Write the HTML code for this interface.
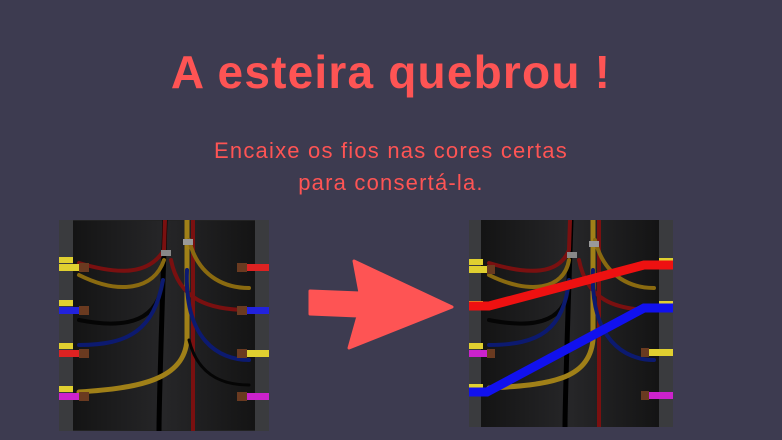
<!DOCTYPE html>
<html><head><meta charset="utf-8"><style>
body{margin:0;width:782px;height:440px;background:#3d3b50;overflow:hidden;position:relative;font-family:"Liberation Sans",sans-serif;color:#fe5454}
h1{position:absolute;left:0;width:782px;top:42px;margin:0;text-align:center;font-size:46px;font-weight:bold;line-height:60px;letter-spacing:1.2px}
.sub{position:absolute;left:0;width:782px;top:135px;text-align:center;font-size:22px;line-height:32px;letter-spacing:1.2px}
svg{position:absolute}
</style></head><body>
<h1>A esteira quebrou !</h1>
<div class="sub">Encaixe os fios nas cores certas<br>para consertá-la.</div>

<svg style="left:59px;top:220px" width="210" height="211" viewBox="0 0 210 211">
<defs><linearGradient id="bg" x1="0" x2="1"><stop offset="0" stop-color="#111"/><stop offset=".5" stop-color="#262628"/><stop offset="1" stop-color="#111"/></linearGradient></defs>
<rect width="210" height="211" fill="url(#bg)" stroke="#222" stroke-width="2"/>
<rect x="0" y="0" width="14" height="211" fill="#3a3b3e"/><rect x="196" y="0" width="14" height="211" fill="#3a3b3e"/>
<g fill="none" stroke-linecap="round">
<path d="M106 0 C104 60 100 180 100 211" stroke="#000" stroke-width="5"/>
<path d="M134 0 C134 80 134 180 134 211" stroke="#7a1010" stroke-width="4"/>
<path d="M20 43 C60 55 90 55 105 30 L106 0" stroke="#7a1010" stroke-width="4"/>
<path d="M20 55 C60 75 95 70 105 40" stroke="#8a6a10" stroke-width="4"/>
<path d="M20 100 C70 110 100 100 104 60" stroke="#050505" stroke-width="4"/>
<path d="M20 125 C70 125 95 110 104 60" stroke="#0c1a70" stroke-width="4"/>
<path d="M20 172 C80 168 125 160 128 120 L128 0" stroke="#a08018" stroke-width="5"/>
<path d="M130 20 C140 60 170 68 190 68" stroke="#8a6a10" stroke-width="4"/>
<path d="M112 40 C120 80 150 90 190 90" stroke="#7a1010" stroke-width="4"/>
<path d="M128 50 C125 120 160 140 190 140" stroke="#0c1a70" stroke-width="4"/>
<path d="M130 120 C140 160 170 165 190 165" stroke="#050505" stroke-width="3"/>
</g>
<rect x="102" y="30" width="10" height="6" fill="#888"/><rect x="124" y="19" width="10" height="6" fill="#999"/>
<g>
<rect x="0" y="37" width="14" height="6" fill="#e0d030"/><rect x="0" y="44" width="22" height="7" fill="#e0d030"/><rect x="20" y="43" width="10" height="9" fill="#6a3a20"/>
<rect x="0" y="80" width="14" height="6" fill="#e0d030"/><rect x="0" y="87" width="22" height="7" fill="#2222dd"/><rect x="20" y="86" width="10" height="9" fill="#6a3a20"/>
<rect x="0" y="123" width="14" height="6" fill="#e0d030"/><rect x="0" y="130" width="22" height="7" fill="#dd2222"/><rect x="20" y="129" width="10" height="9" fill="#6a3a20"/>
<rect x="0" y="166" width="14" height="6" fill="#e0d030"/><rect x="0" y="173" width="22" height="7" fill="#cc22cc"/><rect x="20" y="172" width="10" height="9" fill="#6a3a20"/>
<rect x="186" y="44" width="24" height="7" fill="#dd2222"/><rect x="178" y="43" width="10" height="9" fill="#6a3a20"/>
<rect x="186" y="87" width="24" height="7" fill="#2222dd"/><rect x="178" y="86" width="10" height="9" fill="#6a3a20"/>
<rect x="186" y="130" width="24" height="7" fill="#e0d030"/><rect x="178" y="129" width="10" height="9" fill="#6a3a20"/>
<rect x="186" y="173" width="24" height="7" fill="#cc22cc"/><rect x="178" y="172" width="10" height="9" fill="#6a3a20"/>
</g>
</svg>

<svg style="left:308px;top:258px" width="150" height="94" viewBox="308 258 150 94">
<path d="M310 291 L360 293 L354 261 L452 307 L349 348 L358 316 L310 314 Z" fill="#fe5454" stroke="#fe5454" stroke-width="3" stroke-linejoin="round"/>
</svg>

<svg style="left:469px;top:220px" width="204" height="207" viewBox="0 0 204 207">
<rect width="204" height="207" fill="url(#bg)"/>
<rect x="0" y="0" width="12" height="207" fill="#3a3b3e"/><rect x="190" y="0" width="14" height="207" fill="#3a3b3e"/>
<g fill="none" stroke-linecap="round">
<path d="M102 0 C100 60 96 180 96 207" stroke="#000" stroke-width="5"/>
<path d="M130 0 C130 80 130 180 130 207" stroke="#7a1010" stroke-width="4"/>
<path d="M20 43 C60 55 90 55 100 30 L101 0" stroke="#7a1010" stroke-width="4"/>
<path d="M20 55 C60 75 95 70 100 40" stroke="#8a6a10" stroke-width="4"/>
<path d="M20 100 C70 110 100 100 100 60" stroke="#050505" stroke-width="4"/>
<path d="M20 125 C70 125 95 110 100 60" stroke="#0c1a70" stroke-width="4"/>
<path d="M20 168 C80 165 120 160 124 120 L124 0" stroke="#a08018" stroke-width="5"/>
<path d="M126 20 C136 60 166 68 185 68" stroke="#8a6a10" stroke-width="4"/>
<path d="M110 40 C118 80 146 90 185 90" stroke="#7a1010" stroke-width="4"/>
<path d="M124 50 C121 120 156 140 185 140" stroke="#0c1a70" stroke-width="4"/>
</g>
<rect x="98" y="32" width="10" height="6" fill="#888"/><rect x="120" y="21" width="10" height="6" fill="#999"/>
<rect x="0" y="39" width="14" height="6" fill="#e0d030"/><rect x="0" y="46" width="20" height="7" fill="#e0d030"/><rect x="18" y="45" width="8" height="9" fill="#6a3a20"/>
<rect x="0" y="81" width="14" height="6" fill="#e0d030"/>
<rect x="0" y="123" width="14" height="6" fill="#e0d030"/><rect x="0" y="130" width="20" height="7" fill="#cc22cc"/><rect x="18" y="129" width="8" height="9" fill="#6a3a20"/>
<rect x="0" y="164" width="14" height="6" fill="#e0d030"/>
<rect x="190" y="38" width="14" height="6" fill="#e0d030"/><rect x="190" y="81" width="14" height="6" fill="#e0d030"/>
<rect x="180" y="129" width="24" height="7" fill="#e0d030"/><rect x="172" y="128" width="8" height="9" fill="#6a3a20"/>
<rect x="180" y="172" width="24" height="7" fill="#cc22cc"/><rect x="172" y="171" width="8" height="9" fill="#6a3a20"/>
<path d="M0 86 L20 86 L175 45 L204 45" fill="none" stroke="#ee1111" stroke-width="9"/>
<path d="M0 172 L18 172 L175 88 L204 88" fill="none" stroke="#1111ee" stroke-width="9"/>
</svg>
</body></html>
